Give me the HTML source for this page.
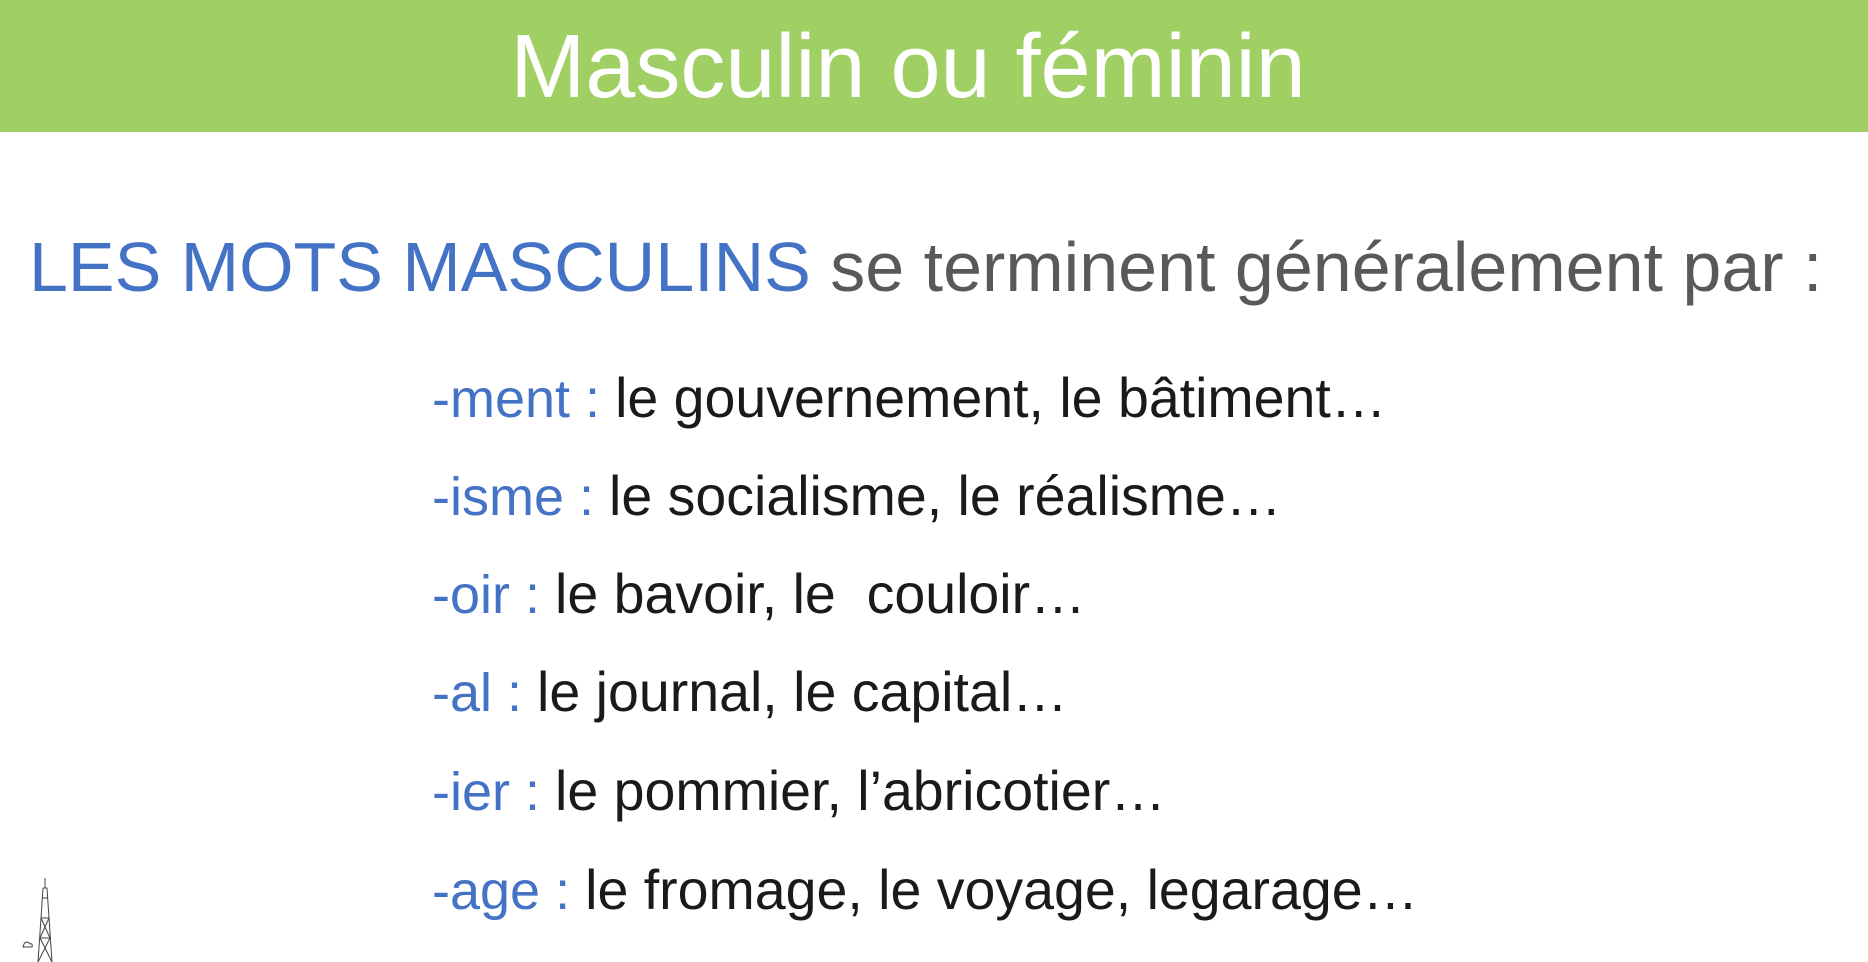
<!DOCTYPE html>
<html><head><meta charset="utf-8"><style>
html,body{margin:0;padding:0;background:#fff;width:1868px;height:962px;overflow:hidden;font-family:"Liberation Sans",sans-serif}
.bar{position:absolute;left:0;top:0;width:1868px;height:132px;background:#a0cf64}
.title{position:absolute;left:-26px;width:1868px;top:12px;text-align:center;color:#fff;font-size:90px;line-height:110px}
.title span{display:inline-block;transform:scaleX(1.0)}
.h{position:absolute;left:29px;top:222px;font-size:70px;line-height:90px;white-space:nowrap;color:#595959}
.b{color:#4472c4}
.it{position:absolute;left:432px;font-size:54px;line-height:60px;white-space:nowrap;color:#1a1a1a}
.it .b{color:#4472c4}
.it .k{font-size:55.5px}
</style></head><body>
<div class="bar"></div>
<div class="title"><span>Masculin ou féminin</span></div>
<div class="h"><span class="b">LES MOTS MASCULINS</span> se terminent généralement par :</div>
<div class="it" style="top:368px"><span class="b">-ment :</span> <span class="k">le gouvernement, le bâtiment…</span></div>
<div class="it" style="top:466px"><span class="b">-isme :</span> <span class="k">le socialisme, le réalisme…</span></div>
<div class="it" style="top:564px"><span class="b">-oir :</span> <span class="k">le bavoir, le&nbsp; couloir…</span></div>
<div class="it" style="top:662px"><span class="b">-al :</span> <span class="k">le journal, le capital…</span></div>
<div class="it" style="top:761px"><span class="b">-ier :</span> <span class="k">le pommier, l’abricotier…</span></div>
<div class="it" style="top:860px"><span class="b">-age :</span> <span class="k">le fromage, le voyage, legarage…</span></div>
<svg style="position:absolute;left:20px;top:878px" width="40" height="84" viewBox="0 0 40 84">
<g stroke="#444" fill="none" stroke-width="1">
<line x1="25" y1="0" x2="25" y2="10"/>
<path d="M23 10 L27 10 L29 40 L32 84 M23 10 L21 40 L18 84"/>
<path d="M21 40 L29 40 M20 60 L30 60 M22 20 L28 20"/>
<path d="M21 40 L30 60 M29 40 L20 60 M20 60 L32 84 M30 60 L18 84"/>
<path d="M4 66 q3 -4 6 0 q3 -1 2 3 l-9 0 z"/>
</g></svg>
</body></html>
